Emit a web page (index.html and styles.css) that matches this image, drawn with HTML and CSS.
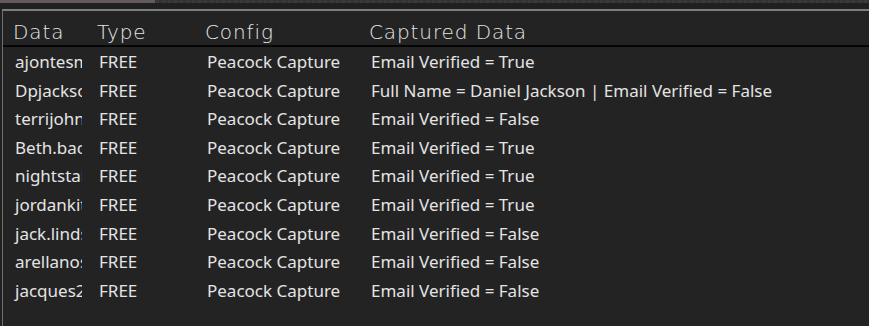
FILE: index.html
```html
<!DOCTYPE html>
<html>
  <head>
    <meta charset="utf-8" />
    <link rel="stylesheet" href="styles.css">
  </head>
  <body>
    <div class="scroll-strip">
      <div class="scroll-thumb"></div>
    </div>
    <div class="panel">
      <div class="grid-head">
        <div class="head-cell">Data</div>
        <div class="head-cell">Type</div>
        <div class="head-cell">Config</div>
        <div class="head-cell">Captured Data</div>
      </div>
      <div class="grid-body">
        <div class="grid-row">
          <div class="cell cell-data">ajontesmith</div>
          <div class="cell">FREE</div>
          <div class="cell">Peacock Capture</div>
          <div class="cell">Email Verified = True</div>
        </div>
        <div class="grid-row">
          <div class="cell cell-data">Dpjackson</div>
          <div class="cell">FREE</div>
          <div class="cell">Peacock Capture</div>
          <div class="cell">Full Name = Daniel Jackson | Email Verified = False</div>
        </div>
        <div class="grid-row">
          <div class="cell cell-data">terrijohnson</div>
          <div class="cell">FREE</div>
          <div class="cell">Peacock Capture</div>
          <div class="cell">Email Verified = False</div>
        </div>
        <div class="grid-row">
          <div class="cell cell-data">Beth.bacon</div>
          <div class="cell">FREE</div>
          <div class="cell">Peacock Capture</div>
          <div class="cell">Email Verified = True</div>
        </div>
        <div class="grid-row">
          <div class="cell cell-data">nightstalker</div>
          <div class="cell">FREE</div>
          <div class="cell">Peacock Capture</div>
          <div class="cell">Email Verified = True</div>
        </div>
        <div class="grid-row">
          <div class="cell cell-data">jordankitt</div>
          <div class="cell">FREE</div>
          <div class="cell">Peacock Capture</div>
          <div class="cell">Email Verified = True</div>
        </div>
        <div class="grid-row">
          <div class="cell cell-data">jack.lindsay</div>
          <div class="cell">FREE</div>
          <div class="cell">Peacock Capture</div>
          <div class="cell">Email Verified = False</div>
        </div>
        <div class="grid-row">
          <div class="cell cell-data">arellanos</div>
          <div class="cell">FREE</div>
          <div class="cell">Peacock Capture</div>
          <div class="cell">Email Verified = False</div>
        </div>
        <div class="grid-row">
          <div class="cell cell-data">jacques2</div>
          <div class="cell">FREE</div>
          <div class="cell">Peacock Capture</div>
          <div class="cell">Email Verified = False</div>
        </div>
      </div>
    </div>
  </body>
</html>
```

FILE: styles.css
```css
* {
  box-sizing: border-box;
}

html,
body {
  margin: 0;
  height: 100%;
  background-color: #202020;
  overflow: hidden;
}

body {
  display: flex;
  flex-direction: column;
  font-family: "Noto Sans", sans-serif;
  color: #e2e2e2;
}

/*thin scrollbar strip at the very top:*/
.scroll-strip {
  height: 3px;
  background: repeating-linear-gradient(90deg, #3a3a3a 0 3px, #333 3px 6px);
}

.scroll-thumb {
  width: 155px;
  height: 3px;
  background-color: #625a5e;
}

.panel {
  flex: 1;
  margin-top: 6px;
  margin-left: 2px;
  border-top: 2px solid #7d7d7d;
  border-left: 1px solid #6f6f6f;
  background-color: #232323;
}

.grid-head,
.grid-row {
  display: grid;
  grid-template-columns: 84px 108px 164px 1fr;
}

.grid-head {
  height: 36px;
  border-bottom: 2px solid #050505;
}

.head-cell {
  padding-left: 10px;
  padding-top: 9px;
  font-family: "DejaVu Sans", sans-serif;
  font-weight: 200;
  font-size: 20px;
  line-height: 24px;
  letter-spacing: 0.9px;
  color: #e6e6e6;
  white-space: nowrap;
}

.grid-body {
  padding-top: 1px;
}

.grid-row {
  height: 28.6px;
}

.cell {
  padding-left: 12px;
  font-size: 17px;
  line-height: 28px;
  white-space: nowrap;
  color: #e4e4e4;
}

.cell-data {
  overflow: hidden;
  margin-right: 5px;
}
```
